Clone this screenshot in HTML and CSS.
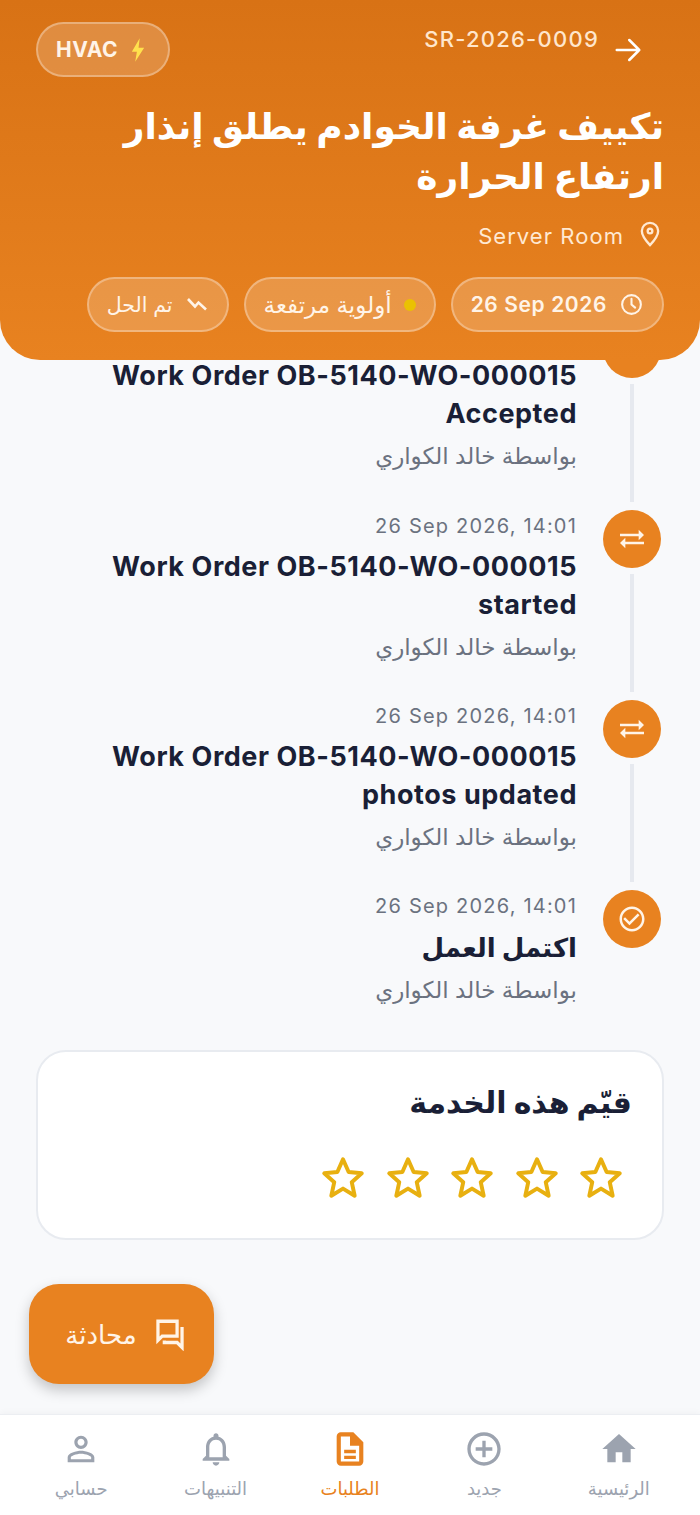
FILE: index.html
```html
<!DOCTYPE html>
<html lang="ar" dir="rtl">
<head>
  <meta charset="UTF-8">
  <meta name="viewport" content="width=device-width, initial-scale=1.0">
  <title>SR-2026-0009</title>
  <link rel="stylesheet" href="styles.css">
</head>
<body>
  <div class="screen">
    <header class="hero">
      <div class="hero-top">
        <div class="ref">
          <svg class="back" viewBox="0 0 24 24"><path d="M3 12h18M13 4l8 8-8 8"/></svg>
          <span class="ref-no" dir="ltr">SR-2026-0009</span>
        </div>
        <div class="pill pill-cat">
          <svg class="ico-bolt" viewBox="0 0 24 24"><path d="M13.5 1.5 6.5 13.5h4.5L9.5 22.5l8-12.5h-5z"/></svg>
          <span>HVAC</span>
        </div>
      </div>
      <h1>تكييف غرفة الخوادم يطلق إنذار ارتفاع الحرارة</h1>
      <div class="place">
        <svg class="ico-pin" viewBox="0 0 24 24"><path d="M12 2.5c-3.9 0-7 3-7 6.900 0 4.700 7 12.100 7 12.100s7-7.400 7-12.100c0-3.900-3.100-6.900-7-6.900z"/><circle cx="12" cy="9.500" r="2"/></svg>
        <span dir="ltr">Server Room</span>
      </div>
      <div class="pills">
        <div class="pill pill-date">
          <svg class="ico-clock" viewBox="0 0 24 24"><circle cx="12" cy="12" r="9"/><path d="M12 6.500V12l3.500 3"/></svg>
          <span dir="ltr">26 Sep 2026</span>
        </div>
        <div class="pill pill-priority">
          <i class="dot"></i>
          <span>أولوية مرتفعة</span>
        </div>
        <div class="pill pill-status">
          <svg class="ico-trend" viewBox="0 0 24 24"><path d="M3 6l7 7.500 3.500-4 7.500 7"/></svg>
          <span>تم الحل</span>
        </div>
      </div>
    </header>

    <main class="content">
      <ul class="timeline">
        <li class="event event-first">
          <div class="rail">
            <div class="node"></div>
            <div class="line"></div>
          </div>
          <div class="event-body">
            <p class="event-title">Work Order OB-5140-WO-000015 Accepted</p>
            <p class="event-by">بواسطة خالد الكواري</p>
          </div>
        </li>
        <li class="event">
          <div class="rail">
            <div class="node"><svg class="ico-swap" viewBox="0 0 24 24"><path d="M3 8.100h14V5l4 4-4 4V9.900H3zM21 14.100H7V11l-4 4 4 4v-3.100h14z"/></svg></div>
            <div class="line"></div>
          </div>
          <div class="event-body">
            <p class="event-date" dir="ltr">26 Sep 2026, 14:01</p>
            <p class="event-title">Work Order OB-5140-WO-000015 started</p>
            <p class="event-by">بواسطة خالد الكواري</p>
          </div>
        </li>
        <li class="event">
          <div class="rail">
            <div class="node"><svg class="ico-swap" viewBox="0 0 24 24"><path d="M3 8.100h14V5l4 4-4 4V9.900H3zM21 14.100H7V11l-4 4 4 4v-3.100h14z"/></svg></div>
            <div class="line"></div>
          </div>
          <div class="event-body">
            <p class="event-date" dir="ltr">26 Sep 2026, 14:01</p>
            <p class="event-title">Work Order OB-5140-WO-000015 photos updated</p>
            <p class="event-by">بواسطة خالد الكواري</p>
          </div>
        </li>
        <li class="event event-last">
          <div class="rail">
            <div class="node"><svg viewBox="0 0 24 24"><path d="M16.590 7.580L10 14.170l-3.590-3.580L5 12l5 5 8-8zM12 2C6.480 2 2 6.480 2 12s4.480 10 10 10 10-4.480 10-10S17.520 2 12 2zm0 18c-4.420 0-8-3.580-8-8s3.580-8 8-8 8 3.580 8 8-3.580 8-8 8z"/></svg></div>
          </div>
          <div class="event-body">
            <p class="event-date" dir="ltr">26 Sep 2026, 14:01</p>
            <p class="event-title event-title-ar">اكتمل العمل</p>
            <p class="event-by">بواسطة خالد الكواري</p>
          </div>
        </li>
      </ul>

      <section class="rate-card">
        <h2>قيّم هذه الخدمة</h2>
        <div class="stars">
          <svg viewBox="0 0 24 24"><path d="M12 3l2.700 6.100 6.300.6-4.800 4.300 1.400 6.500L12 17.100 6.400 20.500 7.800 14 3 9.700l6.300-.6z"/></svg>
          <svg viewBox="0 0 24 24"><path d="M12 3l2.700 6.100 6.300.6-4.800 4.300 1.400 6.500L12 17.100 6.400 20.500 7.800 14 3 9.700l6.300-.6z"/></svg>
          <svg viewBox="0 0 24 24"><path d="M12 3l2.700 6.100 6.300.6-4.800 4.300 1.400 6.500L12 17.100 6.400 20.500 7.800 14 3 9.700l6.300-.6z"/></svg>
          <svg viewBox="0 0 24 24"><path d="M12 3l2.700 6.100 6.300.6-4.800 4.300 1.400 6.500L12 17.100 6.400 20.500 7.800 14 3 9.700l6.300-.6z"/></svg>
          <svg viewBox="0 0 24 24"><path d="M12 3l2.700 6.100 6.300.6-4.800 4.300 1.400 6.500L12 17.100 6.400 20.500 7.800 14 3 9.700l6.300-.6z"/></svg>
        </div>
      </section>
    </main>

    <button class="chat-fab">
      <svg viewBox="0 0 24 24"><path d="M3.500 3h13.500v10.500H6.500l-3 3zM20.500 7v14.500L17 18H8v-1.500"/></svg>
      <span>محادثة</span>
    </button>

    <nav class="tabbar">
      <a class="tab">
        <svg viewBox="0 0 24 24"><path class="fill" d="M10 20v-6h4v6h5v-8h3L12 3 2 12h3v8z"/></svg>
        <span>الرئيسية</span>
      </a>
      <a class="tab">
        <svg viewBox="0 0 24 24"><path class="fill" d="M13 7h-2v4H7v2h4v4h2v-4h4v-2h-4V7zm-1-5C6.480 2 2 6.480 2 12s4.480 10 10 10 10-4.480 10-10S17.520 2 12 2zm0 18c-4.410 0-8-3.590-8-8s3.590-8 8-8 8 3.590 8 8-3.590 8-8 8z"/></svg>
        <span>جديد</span>
      </a>
      <a class="tab tab-active">
        <svg viewBox="0 0 24 24"><path class="fill" d="M14 2H6.500A2.500 2.500 0 0 0 4 4.500v15A2.500 2.500 0 0 0 6.500 22h11a2.500 2.500 0 0 0 2.500-2.500V8l-6-6zM6.500 19.500v-15H12V10h5.500v9.500zM8.500 12.500h7v2h-7zM8.500 16h7v2h-7z"/></svg>
        <span>الطلبات</span>
      </a>
      <a class="tab">
        <svg viewBox="0 0 24 24"><path class="fill" d="M12 22c1.100 0 2-.9 2-2h-4c0 1.100.9 2 2 2zm6-6v-5c0-3.070-1.630-5.640-4.500-6.320V4c0-.83-.67-1.500-1.500-1.500s-1.500.67-1.500 1.500v.68C7.640 5.360 6 7.920 6 11v5l-2 2v1h16v-1l-2-2zm-2 1H8v-6c0-2.480 1.510-4.500 4-4.500s4 2.020 4 4.500v6z"/></svg>
        <span>التنبيهات</span>
      </a>
      <a class="tab">
        <svg viewBox="0 0 24 24"><path class="fill" d="M12 5.900c1.160 0 2.100.94 2.100 2.100s-.94 2.100-2.100 2.100S9.900 9.160 9.900 8s.94-2.100 2.100-2.100m0 9c2.970 0 6.100 1.460 6.100 2.100v1.100H5.900V17c0-.64 3.130-2.100 6.100-2.100M12 4C9.790 4 8 5.790 8 8s1.790 4 4 4 4-1.790 4-4-1.790-4-4-4zm0 9c-2.670 0-8 1.340-8 4v3h16v-3c0-2.660-5.330-4-8-4z"/></svg>
        <span>حسابي</span>
      </a>
    </nav>
  </div>
</body>
</html>
```

FILE: styles.css
```css
html, body {
  margin: 0;
  padding: 0;
  height: 100%;
}
body {
  font-family: 'Inter', 'Noto Sans', 'DejaVu Sans', sans-serif;
  background: #f8f9fb;
  color: #1a1f36;
}
p, h1, h2, ul {
  margin: 0;
  padding: 0;
}
.screen {
  position: relative;
  width: 700px;
  height: 1515px;
  overflow: hidden;
  display: flex;
  flex-direction: column;
}

/* header */
.hero {
  position: relative;
  z-index: 2;
  height: 360px;
  box-sizing: border-box;
  padding: 22px 36px 0 36px;
  background: linear-gradient(180deg, #d87215 0%, #e88220 100%);
  border-radius: 0 0 40px 40px;
  color: #fff;
  flex-shrink: 0;
}
.hero-top {
  display: flex;
  justify-content: space-between;
  align-items: flex-start;
  height: 55px;
}
.ref {
  display: flex;
  align-items: flex-start;
  gap: 14px;
  padding-top: 3px;
  padding-right: 21px;
}
.ref-no {
  font-size: 22px;
  font-weight: 500;
  letter-spacing: 1.25px;
  color: #ffe6cc;
  line-height: 28px;
}
.back {
  width: 30px;
  height: 30px;
  margin-top: 10px;
  fill: none;
  stroke: #fff;
  stroke-width: 2;
  stroke-linecap: round;
  stroke-linejoin: round;
}
h1 {
  margin-top: 24px;
  font-size: 36px;
  font-weight: 700;
  line-height: 50px;
}
.place {
  display: flex;
  align-items: center;
  gap: 12px;
  margin-top: 20px;
  font-size: 22px;
  letter-spacing: 1.05px;
  line-height: 30px;
  color: #ffe9d2;
}
.ico-pin {
  width: 28px;
  height: 28px;
  margin-top: -4px;
  fill: none;
  stroke: #ffe9d2;
  stroke-width: 2;
}
.pills {
  display: flex;
  gap: 15px;
  margin-top: 26px;
}
.pill {
  display: flex;
  align-items: center;
  gap: 12px;
  height: 55px;
  box-sizing: border-box;
  padding: 0 18px;
  border: 2px solid rgba(255, 255, 255, 0.3);
  border-radius: 28px;
  background: rgba(255, 255, 255, 0.18);
  font-size: 21px;
  color: #fff4e8;
}
.pill-date {
  font-weight: 600;
  letter-spacing: 0.6px;
}
.pill-priority {
  font-size: 23px;
}
.pill-status {
  font-size: 20.500px;
}
.pill-cat {
  gap: 8px;
  font-weight: 700;
  letter-spacing: 0.5px;
}
.ico-bolt {
  width: 24px;
  height: 24px;
  transform: scale(1.12);
  fill: #ffe14d;
}
.ico-clock {
  width: 25px;
  height: 25px;
  fill: none;
  stroke: #fff4e8;
  stroke-width: 2;
  stroke-linecap: round;
}
.ico-trend {
  width: 24px;
  height: 24px;
  fill: none;
  stroke: #fff4e8;
  stroke-width: 2.600;
}
.dot {
  width: 12px;
  height: 12px;
  border-radius: 50%;
  background: #eac102;
}

/* timeline */
.content {
  flex: 1;
  display: flex;
  flex-direction: column;
  padding: 0 36px;
}
.timeline {
  list-style: none;
  margin-top: -40px;
  padding-right: 3px;
}
.event {
  display: flex;
  gap: 26px;
  height: 190px;
}
.event-last {
  height: 160px;
}
.rail {
  width: 58px;
  flex-shrink: 0;
  display: flex;
  flex-direction: column;
  align-items: center;
}
.node {
  width: 58px;
  height: 58px;
  border-radius: 50%;
  background: #e88220;
  display: flex;
  align-items: center;
  justify-content: center;
  flex-shrink: 0;
}
.node svg {
  width: 30px;
  height: 30px;
  fill: #fff4e8;
}
.node .ico-swap {
  width: 32px;
  height: 32px;
}
.line {
  width: 4px;
  height: 118px;
  margin-top: 6px;
  background: #e6e9ef;
}
.event-body {
  flex: 1;
  text-align: right;
}
.event-first .event-body {
  padding-top: 37px;
}
.event-date {
  padding-top: 1px;
  font-size: 20px;
  line-height: 30px;
  letter-spacing: 1.2px;
  color: #6b7280;
}
.event-title {
  margin-top: 7px;
  font-size: 27px;
  font-weight: 700;
  line-height: 38px;
  letter-spacing: 0.55px;
  color: #1a1f36;
}
.event-first .event-title {
  margin-top: 0;
}
.event-title-ar {
  margin-top: 8px;
  font-size: 26px;
}
.event-by {
  margin-top: 6px;
  font-size: 23px;
  line-height: 34px;
  color: #6b7280;
}

/* rating */
.rate-card {
  height: 190px;
  box-sizing: border-box;
  padding: 28px 30px 0;
  background: #fff;
  border: 2px solid #e8ebf0;
  border-radius: 30px;
}
h2 {
  font-size: 30px;
  font-weight: 700;
  line-height: 44px;
  color: #1a1f36;
}
.stars {
  display: flex;
  gap: 14.500px;
  margin-top: 29px;
  padding-right: 6px;
}
.stars svg {
  width: 50px;
  height: 50px;
  fill: none;
  stroke: #e8b010;
  stroke-width: 1.900;
  stroke-linejoin: round;
}

/* chat button floats above the page */
.chat-fab {
  position: absolute;
  left: 29px;
  top: 1284px;
  width: 185px;
  height: 100px;
  display: flex;
  align-items: center;
  justify-content: center;
  gap: 16px;
  padding: 0 0 0 9px;
  border: none;
  border-radius: 30px;
  background: #e88220;
  color: #fff4e8;
  font-family: inherit;
  font-size: 26px;
  font-weight: 500;
  box-shadow: 0 6px 14px rgba(0, 0, 0, 0.22);
}
.chat-fab svg {
  width: 34px;
  height: 34px;
  fill: none;
  stroke: #fff4e8;
  stroke-width: 2.300;
}

/* bottom nav */
.tabbar {
  height: 101px;
  box-sizing: border-box;
  flex-shrink: 0;
  display: flex;
  padding: 14px 14px 0;
  background: #fff;
  border-top: 1px solid #eceef2;
  box-shadow: 0 -2px 6px rgba(0, 0, 0, 0.03);
}
.tab {
  flex: 1;
  display: flex;
  flex-direction: column;
  align-items: center;
  gap: 6px;
  font-size: 18px;
  line-height: 28px;
  color: #9ca3af;
}
.tab svg {
  width: 40px;
  height: 40px;
}
.tab .fill {
  fill: #9ca3af;
}
.tab-active {
  color: #e88220;
}
.tab-active .fill {
  fill: #e88220;
}
```
